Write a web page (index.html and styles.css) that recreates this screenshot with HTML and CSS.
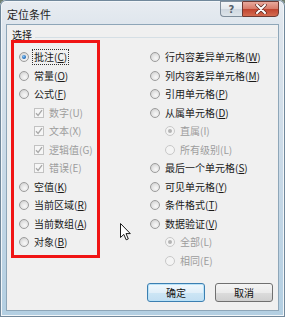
FILE: index.html
```html
<!DOCTYPE html>
<html lang="zh-CN">
<head>
    <meta charset="UTF-8">
    <meta name="viewport" content="width=device-width, initial-scale=1.0">
    <title>定位条件</title>
    <link rel="stylesheet" href="styles.css">
</head>
<body>
    <div class="window">
        <div class="titlebar">
            <span class="title">定位条件</span>
            <div class="caption">
                <span class="cap-help">?</span>
                <span class="cap-close">
                    <svg width="12" height="10" viewBox="0 0 12 10">
                        <path d="M2 1 L10 9 M10 1 L2 9" stroke="#5a2a24" stroke-width="3.4" stroke-linecap="round"/>
                        <path d="M2 1 L10 9 M10 1 L2 9" stroke="#ffffff" stroke-width="2" stroke-linecap="round"/>
                    </svg>
                </span>
            </div>
        </div>

        <div class="client">
            <div class="group-head">
                <span>选择</span>
                <i class="group-line"></i>
            </div>

            <div class="cols">
                <div class="col">
                    <div class="opt"><span class="radio checked"></span><span class="txt focus">批注(<u>C</u>)</span></div>
                    <div class="opt"><span class="radio"></span><span class="txt">常量(<u>O</u>)</span></div>
                    <div class="opt"><span class="radio"></span><span class="txt">公式(<u>F</u>)</span></div>
                    <div class="opt sub off"><span class="check"><svg width="8" height="8" viewBox="0 0 8 8"><path d="M1 4.2 L3.1 6.4 L7 1.2" fill="none" stroke="#a8a8a8" stroke-width="1.3"/></svg></span><span class="txt">数字(U)</span></div>
                    <div class="opt sub off"><span class="check"><svg width="8" height="8" viewBox="0 0 8 8"><path d="M1 4.2 L3.1 6.4 L7 1.2" fill="none" stroke="#a8a8a8" stroke-width="1.3"/></svg></span><span class="txt">文本(X)</span></div>
                    <div class="opt sub off"><span class="check"><svg width="8" height="8" viewBox="0 0 8 8"><path d="M1 4.2 L3.1 6.4 L7 1.2" fill="none" stroke="#a8a8a8" stroke-width="1.3"/></svg></span><span class="txt">逻辑值(G)</span></div>
                    <div class="opt sub off"><span class="check"><svg width="8" height="8" viewBox="0 0 8 8"><path d="M1 4.2 L3.1 6.4 L7 1.2" fill="none" stroke="#a8a8a8" stroke-width="1.3"/></svg></span><span class="txt">错误(E)</span></div>
                    <div class="opt"><span class="radio"></span><span class="txt">空值(<u>K</u>)</span></div>
                    <div class="opt"><span class="radio"></span><span class="txt">当前区域(<u>R</u>)</span></div>
                    <div class="opt"><span class="radio"></span><span class="txt">当前数组(<u>A</u>)</span></div>
                    <div class="opt"><span class="radio"></span><span class="txt">对象(<u>B</u>)</span></div>
                </div>
                <div class="col">
                    <div class="opt"><span class="radio"></span><span class="txt">行内容差异单元格(<u>W</u>)</span></div>
                    <div class="opt"><span class="radio"></span><span class="txt">列内容差异单元格(<u>M</u>)</span></div>
                    <div class="opt"><span class="radio"></span><span class="txt">引用单元格(<u>P</u>)</span></div>
                    <div class="opt"><span class="radio"></span><span class="txt">从属单元格(<u>D</u>)</span></div>
                    <div class="opt sub off"><span class="radio checked"></span><span class="txt">直属(I)</span></div>
                    <div class="opt sub off"><span class="radio"></span><span class="txt">所有级别(L)</span></div>
                    <div class="opt"><span class="radio"></span><span class="txt">最后一个单元格(<u>S</u>)</span></div>
                    <div class="opt"><span class="radio"></span><span class="txt">可见单元格(<u>Y</u>)</span></div>
                    <div class="opt"><span class="radio"></span><span class="txt">条件格式(<u>T</u>)</span></div>
                    <div class="opt"><span class="radio"></span><span class="txt">数据验证(<u>V</u>)</span></div>
                    <div class="opt sub off"><span class="radio checked"></span><span class="txt">全部(L)</span></div>
                    <div class="opt sub off"><span class="radio"></span><span class="txt">相同(E)</span></div>
                </div>
            </div>

            <div class="buttons">
                <span class="btn default">确定</span>
                <span class="btn">取消</span>
            </div>

            <!-- red marker drawn over the left options -->
            <div class="marker"></div>
        </div>

        <svg class="cursor" width="11" height="18" viewBox="0 0 11 18">
            <path d="M0.5 0.5 L0.5 14.5 L3.8 11.4 L6.2 16.8 L8.3 15.9 L6 10.6 L10.3 10.6 Z" fill="#ffffff" stroke="#1a1a1a" stroke-width="1" stroke-linejoin="round"/>
        </svg>
    </div>
</body>
</html>
```

FILE: styles.css
```css
body {
    margin: 0;
    background: #6f7f70;
    font-family: "Noto Sans CJK SC", "Noto Sans", sans-serif;
    font-size: 10px;
    color: #1a1a1a;
}
.window {
    position: relative;
    width: 285px;
    height: 317px;
    box-sizing: border-box;
    display: flex;
    flex-direction: column;
    border-radius: 6px 6px 0 0;
    background: linear-gradient(180deg, #e8ecf1 0, #dfe6ed 25px, #c8d9e7 55%, #b3cfe2 100%);
    box-shadow: inset 0 0 0 1px #71889b, inset 0 0 0 2px #f2f6f9;
}
.titlebar {
    height: 25px;
    display: flex;
    justify-content: space-between;
    align-items: flex-start;
}
.title {
    padding: 7px 0 0 7px;
    font-size: 11px;
    line-height: 14px;
    color: #1e1e1e;
}
.caption {
    display: flex;
    margin: 1px 6px 0 0;
}
.cap-help {
    width: 22px;
    height: 16px;
    box-sizing: border-box;
    display: flex;
    align-items: center;
    justify-content: center;
    border: 1px solid #7f8d9b;
    border-right: none;
    border-radius: 0 0 0 4px;
    background: linear-gradient(180deg, #f4f6f8 0, #e3e8ed 50%, #cfd7df 51%, #dde4ea 100%);
    font-family: "DejaVu Sans", sans-serif;
    font-weight: bold;
    font-size: 10px;
    color: #55606b;
}
.cap-close {
    width: 37px;
    height: 16px;
    box-sizing: border-box;
    display: flex;
    align-items: center;
    justify-content: center;
    border: 1px solid #6e3a33;
    border-radius: 0 0 4px 0;
    background: linear-gradient(180deg, #e9a99c 0, #d77a68 50%, #c0432e 51%, #d46b50 100%);
}
.client {
    position: relative;
    flex: 1;
    margin: 0 7px 7px 7px;
    background: #f0f0f0;
    box-shadow: 0 0 0 1px #8ea6b8;
}
.group-head {
    display: flex;
    align-items: center;
    height: 14px;
    padding: 2px 1px 0 5px;
}
.group-line {
    flex: 1;
    height: 1px;
    margin-left: 3px;
    position: relative;
    top: 3px;
    background: #d5dfe5;
}
.cols {
    display: grid;
    grid-template-columns: 131px 1fr;
    margin-top: 6.75px;
    padding-left: 12px;
}
.col {
    display: grid;
    grid-auto-rows: 18.5px;
}
.opt {
    display: flex;
    align-items: center;
    gap: 4px;
    white-space: nowrap;
}
.opt.sub {
    padding-left: 15px;
}
.opt.off .txt {
    color: #9d9d9d;
}
.txt {
    line-height: 14px;
    padding: 0 1px;
}
.txt u {
    text-underline-offset: 1px;
}
.txt.focus {
    outline: 1px dotted #333;
    outline-offset: 0;
}
.radio {
    position: relative;
    width: 10px;
    height: 10px;
    box-sizing: border-box;
    border-radius: 50%;
    border: 1px solid #9c9c9c;
    background: radial-gradient(circle at 60% 65%, #f8f8f8 0, #e6e6e6 45%, #c6c6c6 100%);
}
.radio.checked::after {
    content: "";
    position: absolute;
    left: 2px;
    top: 2px;
    width: 4px;
    height: 4px;
    border-radius: 50%;
    background: radial-gradient(circle at 40% 35%, #8cc7f2 0, #2a74c2 55%, #0f4a8c 100%);
}
.opt.off .radio {
    border-color: #c8c8c8;
    background: #f4f4f4;
}
.opt.off .radio.checked::after {
    background: #b4b4b4;
}
.check {
    width: 10px;
    height: 10px;
    box-sizing: border-box;
    display: flex;
    align-items: center;
    justify-content: center;
    border: 1px solid #c2c2c2;
    background: #f6f6f6;
}
.buttons {
    display: flex;
    justify-content: flex-end;
    gap: 10px;
    margin-top: 13px;
    padding-right: 5px;
}
.btn {
    width: 58px;
    height: 19px;
    box-sizing: border-box;
    display: flex;
    align-items: center;
    justify-content: center;
    border: 1px solid #707070;
    border-radius: 3px;
    background: linear-gradient(180deg, #f4f4f4 0, #ebebeb 50%, #dcdcdc 51%, #d0d0d0 100%);
    color: #111;
}
.btn.default {
    border-color: #3c7fb1;
    box-shadow: inset 0 0 0 1px #b9e2f8;
    background: linear-gradient(180deg, #f0f8fd 0, #e1eff9 50%, #cde6f5 51%, #c2def2 100%);
}
.marker {
    position: absolute;
    left: 4px;
    top: 15px;
    width: 89px;
    height: 218px;
    box-sizing: border-box;
    border: 3px solid #f01515;
}
.cursor {
    position: absolute;
    left: 120px;
    top: 223px;
}
```
